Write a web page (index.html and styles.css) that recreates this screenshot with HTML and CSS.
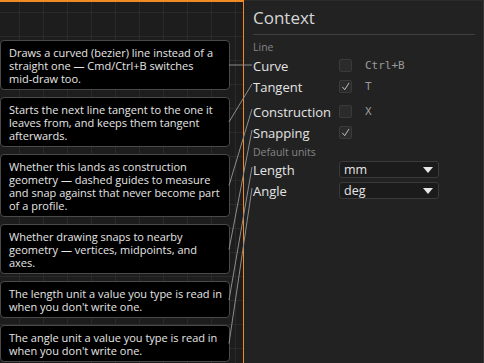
FILE: index.html
```html
<!DOCTYPE html>
<html>
<head>
<meta charset="utf-8">
<link rel="stylesheet" href="styles.css">
</head>
<body>
<div class="app">
  <div class="canvas">
    <div class="notes">
      <div class="note">Draws a curved (bezier) line instead of a straight one — Cmd/Ctrl+B switches mid&#8209;draw too.</div>
      <div class="note">Starts the next line tangent to the one it leaves from, and keeps them tangent afterwards.</div>
      <div class="note">Whether this lands as construction geometry — dashed guides to measure and snap against that never become part of a profile.</div>
      <div class="note">Whether drawing snaps to nearby geometry — vertices, midpoints, and axes.</div>
      <div class="note">The length unit a value you type is read in when you don't write one.</div>
      <div class="note">The angle unit a value you type is read in when you don't write one.</div>
    </div>
  </div>
  <aside class="panel">
    <div class="title">Context</div>
    <div class="section">Line</div>
    <div class="row"><span class="label">Curve</span><span class="check"></span><span class="key">Ctrl+B</span></div>
    <div class="row"><span class="label">Tangent</span><span class="check"><svg viewBox="0 0 14 14" class="tick"><polyline points="3,7.5 6,11 11.5,2.5"/></svg></span><span class="key">T</span></div>
    <div class="row row-gap"><span class="label">Construction</span><span class="check"></span><span class="key">X</span></div>
    <div class="row"><span class="label">Snapping</span><span class="check"><svg viewBox="0 0 14 14" class="tick"><polyline points="3,7.5 6,11 11.5,2.5"/></svg></span></div>
    <div class="section section-units">Default units</div>
    <div class="row row-select"><span class="label">Length</span><span class="select"><span>mm</span><svg viewBox="0 0 10 6" class="arrow"><polygon points="0,0 10,0 5,6"/></svg></span></div>
    <div class="row row-select row-angle"><span class="label">Angle</span><span class="select"><span>deg</span><svg viewBox="0 0 10 6" class="arrow"><polygon points="0,0 10,0 5,6"/></svg></span></div>
  </aside>
  <svg class="leaders" width="484" height="363" viewBox="0 0 484 363">
    <line x1="229" y1="65" x2="252" y2="65"/>
    <line x1="229" y1="122" x2="252" y2="84"/>
    <line x1="229" y1="185.5" x2="252" y2="109"/>
    <line x1="229" y1="249.5" x2="252" y2="130"/>
    <line x1="229" y1="300" x2="252" y2="167"/>
    <line x1="229" y1="343.5" x2="252" y2="188"/>
  </svg>
</div>
</body>
</html>
```

FILE: styles.css
```css
* { box-sizing: border-box; }
html, body { margin: 0; padding: 0; background: #222222; }
body { width: 484px; height: 363px; overflow: hidden; font-family: "Open Sans", "Noto Sans", sans-serif; }

.app { position: relative; display: flex; width: 484px; height: 363px; }

.canvas {
  flex: 0 0 244px;
  height: 363px;
  border-top: 2px solid #f08a22;
  border-right: 1px solid #f08a22;
  background-color: #1d1d1d;
  background-image:
    linear-gradient(to right, #2a2a2a 1px, transparent 1px),
    linear-gradient(to bottom, #2a2a2a 1px, transparent 1px);
  background-size: 24px 24px;
  background-position: 19px 10px;
  overflow: hidden;
}

.notes { display: flex; flex-direction: column; gap: 7px; padding-top: 38px; }

.note {
  width: 230px;
  background: #000000;
  border: 1px solid #4a4a4a;
  border-radius: 4px;
  padding: 5px 6px 4px 8px;
  color: #e6e6e6;
  font-size: 11px;
  line-height: 13px;
}

.panel {
  flex: 1;
  height: 363px;
  background: #222222;
  border-top: 1px solid #2c2c2c;
  border-right: 1px solid #363636;
  padding: 0 8px 0 9px;
  color: #e2e2e2;
}

.title {
  height: 34px;
  border-bottom: 1px solid #404040;
  font-size: 17px;
  line-height: 32px;
  padding-top: 1px;
  color: #d6d6d6;
}

.section {
  height: 20px;
  padding-top: 4px;
  font-size: 10.5px;
  line-height: 16px;
  color: #858585;
}

.section-units { height: 17px; padding-top: 1px; }

.row {
  display: grid;
  grid-template-columns: 86px 26px auto;
  align-items: center;
  height: 21px;
}
.row-gap { margin-top: 4px; }

.label { font-size: 13px; color: #e4e4e4; }

.check {
  width: 13px; height: 13px;
  background: #2b2b2b;
  border: 1px solid #3a3a3a;
  border-radius: 2px;
  display: flex; align-items: center; justify-content: center;
}
.tick { width: 13px; height: 13px; fill: none; stroke: #d8d8d8; stroke-width: 1.1; }

.key { font-family: "DejaVu Sans Mono", monospace; font-size: 11px; color: #9a9a9a; }

.row-select { height: 19px; grid-template-columns: 86px 100px; }
.row-angle { margin-top: 2px; }

.select {
  height: 17px;
  background: #1b1b1b;
  border: 1px solid #3a3a3a;
  border-radius: 3px;
  display: flex; align-items: center; justify-content: space-between;
  padding: 0 5px 0 4px;
  font-size: 12.5px;
  color: #e6e6e6;
}
.arrow { width: 10px; height: 6px; fill: #e6e6e6; }

.leaders { position: absolute; left: 0; top: 0; pointer-events: none; }
.leaders line { stroke: #8c8c8c; stroke-width: 1; }
```
